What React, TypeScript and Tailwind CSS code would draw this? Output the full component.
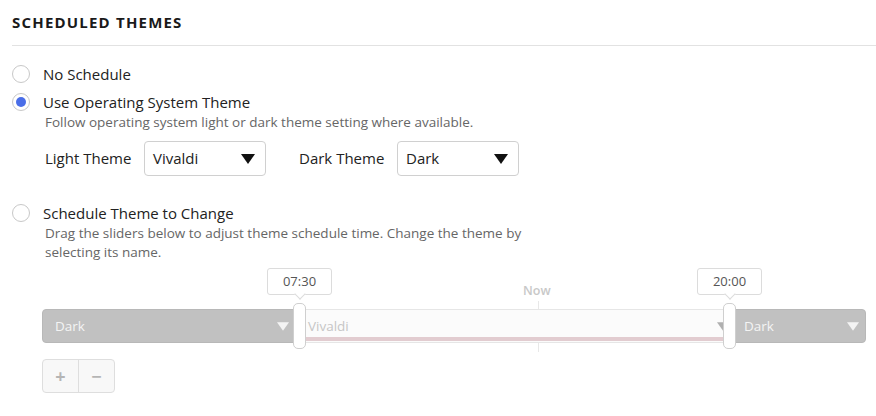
import React from "react";

function Radio({ checked }: { checked?: boolean }) {
  return (
    <span className="w-[18px] h-[18px] rounded-full border border-[#c8c8c8] bg-white flex items-center justify-center shrink-0">
      {checked && <span className="w-[10px] h-[10px] rounded-full bg-[#4a6ee8]" />}
    </span>
  );
}

function Caret({ className }: { className: string }) {
  return (
    <svg width="14" height="10" viewBox="0 0 14 10" className={className}>
      <path d="M0 0 L14 0 L7 10 Z" fill="currentColor" />
    </svg>
  );
}

function Select({ value }: { value: string }) {
  return (
    <div className="w-[122px] h-[35px] border border-[#d0d0d0] rounded-[4px] bg-white flex items-center justify-between pl-[8px] pr-[10px]">
      <span className="text-[15px] text-[#222]">{value}</span>
      <Caret className="text-[#111]" />
    </div>
  );
}

function Tooltip({ time, left }: { time: string; left: number }) {
  return (
    <div className="absolute top-0 flex flex-col items-center" style={{ left }}>
      <div className="w-[65px] h-[27px] border border-[#dcdcdc] rounded-[3px] bg-white flex items-center justify-center text-[13px] text-[#555]">
        {time}
      </div>
      <div className="w-[8px] h-[8px] bg-white border-r border-b border-[#dcdcdc] rotate-45 -mt-[5px]" />
    </div>
  );
}

function Handle({ left }: { left: number }) {
  return (
    <div
      className="absolute top-[35px] w-[13px] h-[46px] rounded-[5px] bg-white border border-[#cfcfcf]"
      style={{ left }}
    />
  );
}

export default function App() {
  return (
    <div className="w-[876px] h-[416px] bg-white pl-[12px] pt-[11px] font-['Open_Sans',sans-serif] text-[#222] overflow-hidden">
      <h2 className="text-[15px] font-bold tracking-[0.08em] text-[#1a1a1a] leading-[22px]">
        SCHEDULED THEMES
      </h2>
      <div className="h-px bg-[#e2e2e2] mt-[12px]" />

      <div className="mt-[17px] flex flex-col">
        <label className="flex items-center gap-[13px] h-[22px]">
          <Radio />
          <span className="text-[15px]">No Schedule</span>
        </label>

        <label className="flex items-center gap-[13px] h-[22px] mt-[6px]">
          <Radio checked />
          <span className="text-[15px]">Use Operating System Theme</span>
        </label>
        <div className="pl-[33px]">
          <p className="text-[13.5px] text-[#666] leading-[19px]">
            Follow operating system light or dark theme setting where available.
          </p>
          <div className="flex items-center mt-[9px]">
            <span className="text-[15px] w-[99px]">Light Theme</span>
            <Select value="Vivaldi" />
            <span className="text-[15px] ml-[33px] w-[98px]">Dark Theme</span>
            <Select value="Dark" />
          </div>
        </div>

        <label className="flex items-center gap-[13px] h-[22px] mt-[26px]">
          <Radio />
          <span className="text-[15px]">Schedule Theme to Change</span>
        </label>
        <p className="pl-[33px] text-[13.5px] text-[#666] leading-[19px] w-[528px]">
          Drag the sliders below to adjust theme schedule time. Change the theme by
          selecting its name.
        </p>

        <div className="relative ml-[30px] mt-[6px] w-[824px] h-[90px]">
          <Tooltip time="07:30" left={225} />
          <Tooltip time="20:00" left={655} />
          <div className="absolute left-[481px] top-[14px] text-[12.5px] font-semibold text-[#c8c8c8]">
            Now
          </div>
          <div className="absolute left-[496px] top-[33px] w-px h-[51px] bg-[#e8e8e8]" />

          <div className="absolute left-0 top-[41px] w-[824px] h-[34px] flex">
            <div className="w-[256px] h-full bg-[#c1c1c1] rounded-l-[4px] border border-[#b8b8b8] flex items-center justify-between pl-[12px] pr-[8px]">
              <span className="text-[13.5px] text-[#f4f4f4]">Dark</span>
              <Caret className="text-[#f4f4f4] w-[12px] h-[9px]" />
            </div>
            <div className="flex-1 h-full bg-[#fbfbfb] border-y border-[#e6e6e6] flex items-center justify-between pl-[10px] pr-[6px] relative">
              <span className="text-[13.5px] text-[#c6c6c6]">Vivaldi</span>
              <Caret className="text-[#b0b0b0] w-[12px] h-[9px]" />
              <div className="absolute left-0 right-0 bottom-[1px] h-[4px] bg-[#e2ccd0]" />
            </div>
            <div className="w-[131px] h-full bg-[#c1c1c1] rounded-r-[4px] border border-[#b8b8b8] flex items-center justify-between pl-[8px] pr-[6px]">
              <span className="text-[13.5px] text-[#f4f4f4]">Dark</span>
              <Caret className="text-[#f4f4f4] w-[12px] h-[9px]" />
            </div>
          </div>
          <Handle left={251} />
          <Handle left={681} />
        </div>

        <div className="ml-[30px] mt-[1px] w-[73px] h-[34px] flex border border-[#dedede] rounded-[4px] bg-[#f8f8f8]">
          <div className="flex-1 flex items-center justify-center text-[#b5b5b5] text-[18px] font-bold border-r border-[#dedede]">
            +
          </div>
          <div className="flex-1 flex items-center justify-center text-[#b5b5b5] text-[18px] font-bold">
            −
          </div>
        </div>
      </div>
    </div>
  );
}
